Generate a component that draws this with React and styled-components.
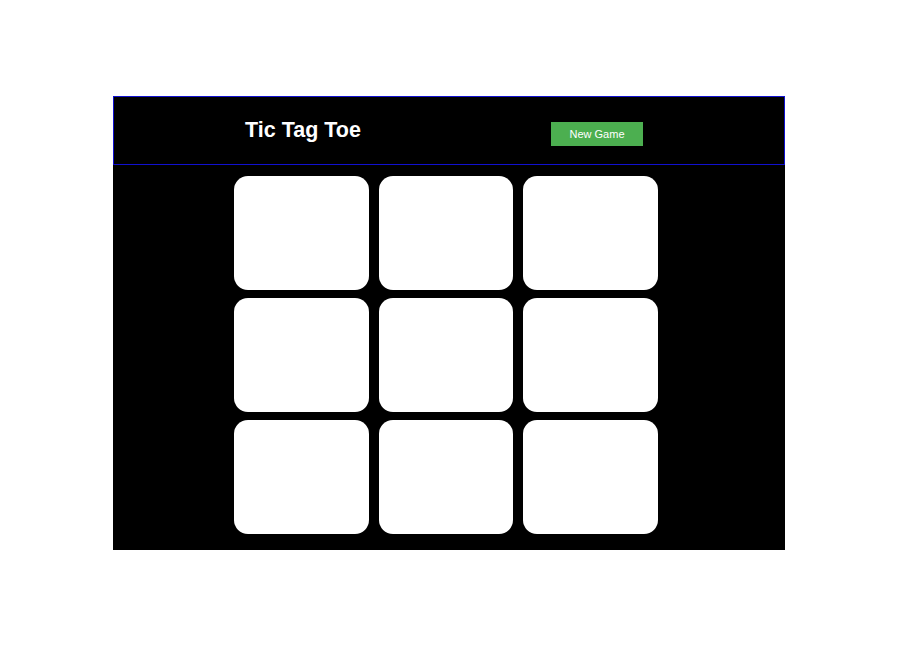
import React, { useState } from "react";
import styled, { createGlobalStyle } from "styled-components";

const GlobalStyle = createGlobalStyle`
  body {
    margin: 0;
    background: #ffffff;
    font-family: "Liberation Sans", Arial, sans-serif;
  }
`;

export default function App() {
  const [cells, setCells] = useState(Array(9).fill(""));
  const [turn, setTurn] = useState("X");

  function play(index) {
    if (cells[index]) return;
    const next = [...cells];
    next[index] = turn;
    setCells(next);
    setTurn(turn === "X" ? "O" : "X");
  }

  function reset() {
    setCells(Array(9).fill(""));
    setTurn("X");
  }

  return (
    <Page>
      <GlobalStyle />
      <Game>
        <Header>
          <Title>Tic Tag Toe</Title>
          <NewGame onClick={reset}>New Game</NewGame>
        </Header>
        <Board>
          {cells.map((value, index) => (
            <Cell key={index} onClick={() => play(index)}>
              {value}
            </Cell>
          ))}
        </Board>
      </Game>
    </Page>
  );
}

const Page = styled.div`
  width: 900px;
  height: 650px;
  padding-top: 96px;
  box-sizing: border-box;
  display: flex;
  justify-content: flex-start;
  padding-left: 113px;
`;
const Game = styled.div`
  width: 672px;
  height: 454px;
  background: #000000;
  display: flex;
  flex-direction: column;
`;
const Header = styled.div`
  height: 67px;
  border: 1px solid #1010d0;
  display: flex;
  align-items: center;
  padding-left: 131px;
`;
const Title = styled.h1`
  margin: 0 0 1px 0;
  width: 306px;
  color: #ffffff;
  font-size: 21.5px;
  font-weight: 700;
`;
const NewGame = styled.button`
  width: 92px;
  height: 24px;
  margin-top: 6px;
  border: none;
  background: #4caf50;
  color: #ffffff;
  font-family: "Liberation Sans", Arial, sans-serif;
  font-size: 11px;
  cursor: pointer;
`;
const Board = styled.div`
  display: grid;
  grid-template-columns: repeat(3, 134.5px);
  grid-auto-rows: 114px;
  column-gap: 10px;
  row-gap: 8px;
  margin: 11px 0 0 121px;
`;
const Cell = styled.div`
  background: #ffffff;
  border-radius: 14px;
  display: flex;
  align-items: center;
  justify-content: center;
  font-size: 48px;
  font-weight: 700;
  cursor: pointer;
`;
